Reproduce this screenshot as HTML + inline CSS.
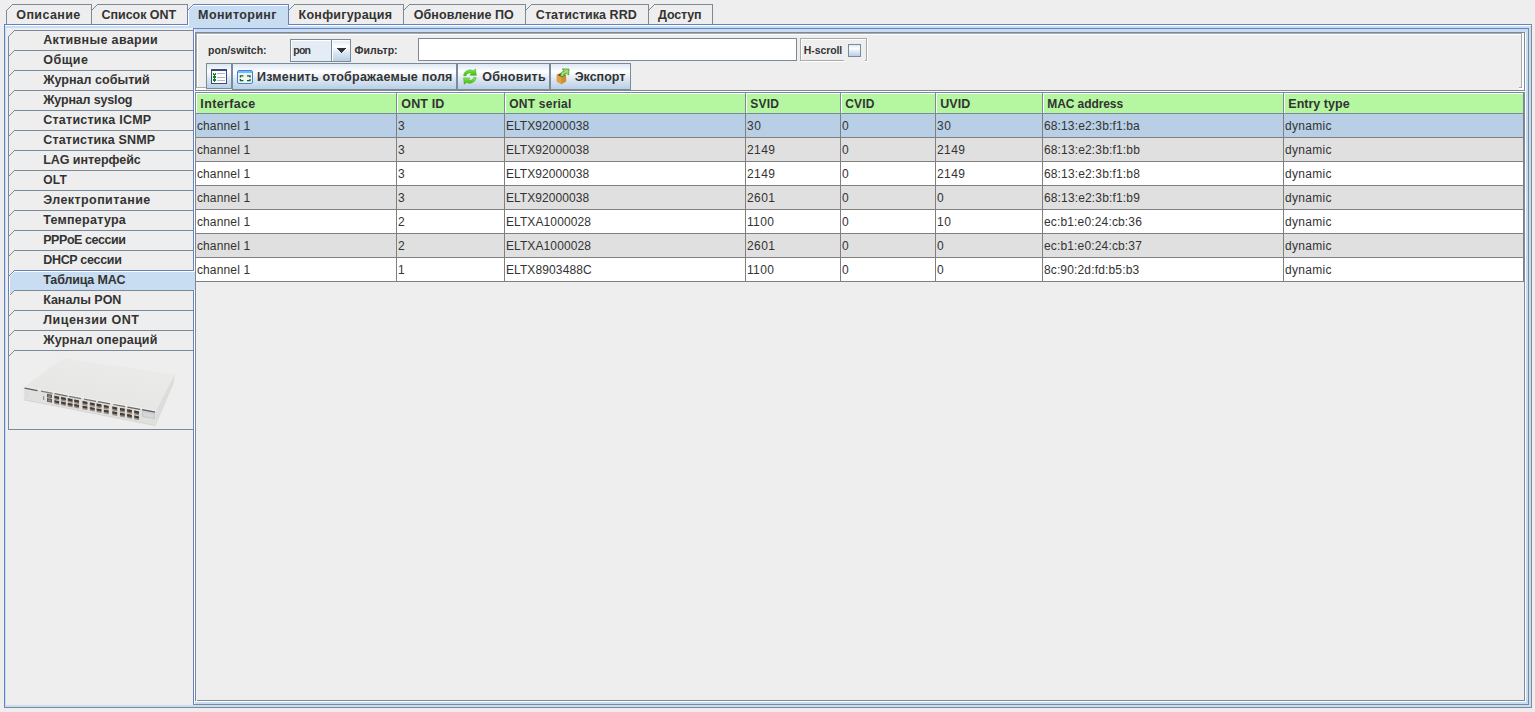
<!DOCTYPE html>
<html lang="ru"><head><meta charset="utf-8"><title>MAC table</title>
<style>
html,body{margin:0;padding:0}
body{width:1535px;height:712px;background:#eeeeee;overflow:hidden;position:relative;
font-family:"Liberation Sans","DejaVu Sans",sans-serif;color:#333333}
svg{position:absolute;left:0;top:0}
.g{position:absolute;left:0;top:0;width:0;height:0}
.t{position:absolute;white-space:pre;font-weight:700;display:block;line-height:16px}
</style></head>
<body>
<svg width="1535" height="712" viewBox="0 0 1535 712" shape-rendering="crispEdges">
<defs>
<linearGradient id="g" x1="0" y1="0" x2="0" y2="1">
<stop offset="0" stop-color="#dde8f3"/><stop offset="0.3" stop-color="#ffffff"/><stop offset="0.6" stop-color="#dde8f3"/><stop offset="1" stop-color="#b8cfe5"/>
</linearGradient>
</defs>
<rect x="4" y="24" width="1528" height="684" fill="#c8ddf2"/>
<rect x="4" y="24" width="1527" height="1" fill="#6382bf"/>
<rect x="5" y="25" width="1526" height="1" fill="#ffffff"/>
<rect x="4" y="24" width="1" height="684" fill="#6382bf"/>
<rect x="1531" y="24" width="1" height="684" fill="#7a8a99"/>
<rect x="4" y="707" width="1528" height="1" fill="#7a8a99"/>
<rect x="6" y="28" width="1523" height="677" fill="#eeeeee"/>
<rect x="12" y="4" width="80" height="1" fill="#7a8a99"/>
<rect x="6" y="10" width="1" height="1" fill="#7a8a99"/>
<rect x="7" y="9" width="1" height="1" fill="#7a8a99"/>
<rect x="8" y="8" width="1" height="1" fill="#7a8a99"/>
<rect x="9" y="7" width="1" height="1" fill="#7a8a99"/>
<rect x="10" y="6" width="1" height="1" fill="#7a8a99"/>
<rect x="11" y="5" width="1" height="1" fill="#7a8a99"/>
<rect x="6" y="10" width="1" height="14" fill="#7a8a99"/>
<rect x="91" y="4" width="1" height="20" fill="#7a8a99"/>
<rect x="97" y="4" width="91" height="1" fill="#7a8a99"/>
<rect x="91" y="10" width="1" height="1" fill="#7a8a99"/>
<rect x="92" y="9" width="1" height="1" fill="#7a8a99"/>
<rect x="93" y="8" width="1" height="1" fill="#7a8a99"/>
<rect x="94" y="7" width="1" height="1" fill="#7a8a99"/>
<rect x="95" y="6" width="1" height="1" fill="#7a8a99"/>
<rect x="96" y="5" width="1" height="1" fill="#7a8a99"/>
<rect x="187" y="4" width="1" height="20" fill="#7a8a99"/>
<polygon points="188,11 194,5 288,5 288,26 188,26" fill="#c8ddf2"/>
<rect x="188" y="24" width="100" height="4" fill="#c8ddf2"/>
<rect x="193" y="4" width="96" height="1" fill="#6382bf"/>
<rect x="187" y="10" width="1" height="1" fill="#6382bf"/>
<rect x="188" y="9" width="1" height="1" fill="#6382bf"/>
<rect x="189" y="8" width="1" height="1" fill="#6382bf"/>
<rect x="190" y="7" width="1" height="1" fill="#6382bf"/>
<rect x="191" y="6" width="1" height="1" fill="#6382bf"/>
<rect x="192" y="5" width="1" height="1" fill="#6382bf"/>
<rect x="187" y="10" width="1" height="15" fill="#6382bf"/>
<rect x="288" y="5" width="1" height="20" fill="#6382bf"/>
<rect x="194" y="5" width="94" height="1" fill="#ffffff"/>
<rect x="188" y="10" width="1" height="1" fill="#ffffff"/>
<rect x="189" y="9" width="1" height="1" fill="#ffffff"/>
<rect x="190" y="8" width="1" height="1" fill="#ffffff"/>
<rect x="191" y="7" width="1" height="1" fill="#ffffff"/>
<rect x="192" y="6" width="1" height="1" fill="#ffffff"/>
<rect x="193" y="5" width="1" height="1" fill="#ffffff"/>
<rect x="188" y="11" width="1" height="15" fill="#ffffff"/>
<rect x="294" y="4" width="110" height="1" fill="#7a8a99"/>
<rect x="288" y="10" width="1" height="1" fill="#7a8a99"/>
<rect x="289" y="9" width="1" height="1" fill="#7a8a99"/>
<rect x="290" y="8" width="1" height="1" fill="#7a8a99"/>
<rect x="291" y="7" width="1" height="1" fill="#7a8a99"/>
<rect x="292" y="6" width="1" height="1" fill="#7a8a99"/>
<rect x="293" y="5" width="1" height="1" fill="#7a8a99"/>
<rect x="403" y="4" width="1" height="20" fill="#7a8a99"/>
<rect x="409" y="4" width="117" height="1" fill="#7a8a99"/>
<rect x="403" y="10" width="1" height="1" fill="#7a8a99"/>
<rect x="404" y="9" width="1" height="1" fill="#7a8a99"/>
<rect x="405" y="8" width="1" height="1" fill="#7a8a99"/>
<rect x="406" y="7" width="1" height="1" fill="#7a8a99"/>
<rect x="407" y="6" width="1" height="1" fill="#7a8a99"/>
<rect x="408" y="5" width="1" height="1" fill="#7a8a99"/>
<rect x="525" y="4" width="1" height="20" fill="#7a8a99"/>
<rect x="531" y="4" width="118" height="1" fill="#7a8a99"/>
<rect x="525" y="10" width="1" height="1" fill="#7a8a99"/>
<rect x="526" y="9" width="1" height="1" fill="#7a8a99"/>
<rect x="527" y="8" width="1" height="1" fill="#7a8a99"/>
<rect x="528" y="7" width="1" height="1" fill="#7a8a99"/>
<rect x="529" y="6" width="1" height="1" fill="#7a8a99"/>
<rect x="530" y="5" width="1" height="1" fill="#7a8a99"/>
<rect x="648" y="4" width="1" height="20" fill="#7a8a99"/>
<rect x="654" y="4" width="59" height="1" fill="#7a8a99"/>
<rect x="648" y="10" width="1" height="1" fill="#7a8a99"/>
<rect x="649" y="9" width="1" height="1" fill="#7a8a99"/>
<rect x="650" y="8" width="1" height="1" fill="#7a8a99"/>
<rect x="651" y="7" width="1" height="1" fill="#7a8a99"/>
<rect x="652" y="6" width="1" height="1" fill="#7a8a99"/>
<rect x="653" y="5" width="1" height="1" fill="#7a8a99"/>
<rect x="712" y="4" width="1" height="20" fill="#7a8a99"/>
<rect x="193" y="28" width="1336" height="677" fill="#c8ddf2"/>
<rect x="193" y="28" width="1335" height="1" fill="#6382bf"/>
<rect x="193" y="28" width="1" height="677" fill="#6382bf"/>
<rect x="194" y="29" width="1" height="675" fill="#ffffff"/>
<rect x="1528" y="28" width="1" height="677" fill="#7a8a99"/>
<rect x="193" y="704" width="1336" height="1" fill="#7a8a99"/>
<rect x="195" y="32" width="1331" height="670" fill="#eeeeee"/>
<rect x="14" y="30" width="179" height="1" fill="#7a8a99"/>
<rect x="8" y="36" width="1" height="1" fill="#7a8a99"/>
<rect x="9" y="35" width="1" height="1" fill="#7a8a99"/>
<rect x="10" y="34" width="1" height="1" fill="#7a8a99"/>
<rect x="11" y="33" width="1" height="1" fill="#7a8a99"/>
<rect x="12" y="32" width="1" height="1" fill="#7a8a99"/>
<rect x="13" y="31" width="1" height="1" fill="#7a8a99"/>
<rect x="14" y="50" width="179" height="1" fill="#7a8a99"/>
<rect x="8" y="56" width="1" height="1" fill="#7a8a99"/>
<rect x="9" y="55" width="1" height="1" fill="#7a8a99"/>
<rect x="10" y="54" width="1" height="1" fill="#7a8a99"/>
<rect x="11" y="53" width="1" height="1" fill="#7a8a99"/>
<rect x="12" y="52" width="1" height="1" fill="#7a8a99"/>
<rect x="13" y="51" width="1" height="1" fill="#7a8a99"/>
<rect x="14" y="70" width="179" height="1" fill="#7a8a99"/>
<rect x="8" y="76" width="1" height="1" fill="#7a8a99"/>
<rect x="9" y="75" width="1" height="1" fill="#7a8a99"/>
<rect x="10" y="74" width="1" height="1" fill="#7a8a99"/>
<rect x="11" y="73" width="1" height="1" fill="#7a8a99"/>
<rect x="12" y="72" width="1" height="1" fill="#7a8a99"/>
<rect x="13" y="71" width="1" height="1" fill="#7a8a99"/>
<rect x="14" y="90" width="179" height="1" fill="#7a8a99"/>
<rect x="8" y="96" width="1" height="1" fill="#7a8a99"/>
<rect x="9" y="95" width="1" height="1" fill="#7a8a99"/>
<rect x="10" y="94" width="1" height="1" fill="#7a8a99"/>
<rect x="11" y="93" width="1" height="1" fill="#7a8a99"/>
<rect x="12" y="92" width="1" height="1" fill="#7a8a99"/>
<rect x="13" y="91" width="1" height="1" fill="#7a8a99"/>
<rect x="14" y="110" width="179" height="1" fill="#7a8a99"/>
<rect x="8" y="116" width="1" height="1" fill="#7a8a99"/>
<rect x="9" y="115" width="1" height="1" fill="#7a8a99"/>
<rect x="10" y="114" width="1" height="1" fill="#7a8a99"/>
<rect x="11" y="113" width="1" height="1" fill="#7a8a99"/>
<rect x="12" y="112" width="1" height="1" fill="#7a8a99"/>
<rect x="13" y="111" width="1" height="1" fill="#7a8a99"/>
<rect x="14" y="130" width="179" height="1" fill="#7a8a99"/>
<rect x="8" y="136" width="1" height="1" fill="#7a8a99"/>
<rect x="9" y="135" width="1" height="1" fill="#7a8a99"/>
<rect x="10" y="134" width="1" height="1" fill="#7a8a99"/>
<rect x="11" y="133" width="1" height="1" fill="#7a8a99"/>
<rect x="12" y="132" width="1" height="1" fill="#7a8a99"/>
<rect x="13" y="131" width="1" height="1" fill="#7a8a99"/>
<rect x="14" y="150" width="179" height="1" fill="#7a8a99"/>
<rect x="8" y="156" width="1" height="1" fill="#7a8a99"/>
<rect x="9" y="155" width="1" height="1" fill="#7a8a99"/>
<rect x="10" y="154" width="1" height="1" fill="#7a8a99"/>
<rect x="11" y="153" width="1" height="1" fill="#7a8a99"/>
<rect x="12" y="152" width="1" height="1" fill="#7a8a99"/>
<rect x="13" y="151" width="1" height="1" fill="#7a8a99"/>
<rect x="14" y="170" width="179" height="1" fill="#7a8a99"/>
<rect x="8" y="176" width="1" height="1" fill="#7a8a99"/>
<rect x="9" y="175" width="1" height="1" fill="#7a8a99"/>
<rect x="10" y="174" width="1" height="1" fill="#7a8a99"/>
<rect x="11" y="173" width="1" height="1" fill="#7a8a99"/>
<rect x="12" y="172" width="1" height="1" fill="#7a8a99"/>
<rect x="13" y="171" width="1" height="1" fill="#7a8a99"/>
<rect x="14" y="190" width="179" height="1" fill="#7a8a99"/>
<rect x="8" y="196" width="1" height="1" fill="#7a8a99"/>
<rect x="9" y="195" width="1" height="1" fill="#7a8a99"/>
<rect x="10" y="194" width="1" height="1" fill="#7a8a99"/>
<rect x="11" y="193" width="1" height="1" fill="#7a8a99"/>
<rect x="12" y="192" width="1" height="1" fill="#7a8a99"/>
<rect x="13" y="191" width="1" height="1" fill="#7a8a99"/>
<rect x="14" y="210" width="179" height="1" fill="#7a8a99"/>
<rect x="8" y="216" width="1" height="1" fill="#7a8a99"/>
<rect x="9" y="215" width="1" height="1" fill="#7a8a99"/>
<rect x="10" y="214" width="1" height="1" fill="#7a8a99"/>
<rect x="11" y="213" width="1" height="1" fill="#7a8a99"/>
<rect x="12" y="212" width="1" height="1" fill="#7a8a99"/>
<rect x="13" y="211" width="1" height="1" fill="#7a8a99"/>
<rect x="14" y="230" width="179" height="1" fill="#7a8a99"/>
<rect x="8" y="236" width="1" height="1" fill="#7a8a99"/>
<rect x="9" y="235" width="1" height="1" fill="#7a8a99"/>
<rect x="10" y="234" width="1" height="1" fill="#7a8a99"/>
<rect x="11" y="233" width="1" height="1" fill="#7a8a99"/>
<rect x="12" y="232" width="1" height="1" fill="#7a8a99"/>
<rect x="13" y="231" width="1" height="1" fill="#7a8a99"/>
<rect x="14" y="250" width="179" height="1" fill="#7a8a99"/>
<rect x="8" y="256" width="1" height="1" fill="#7a8a99"/>
<rect x="9" y="255" width="1" height="1" fill="#7a8a99"/>
<rect x="10" y="254" width="1" height="1" fill="#7a8a99"/>
<rect x="11" y="253" width="1" height="1" fill="#7a8a99"/>
<rect x="12" y="252" width="1" height="1" fill="#7a8a99"/>
<rect x="13" y="251" width="1" height="1" fill="#7a8a99"/>
<polygon points="9,277 15,271 195,271 195,290 15,290 9,296 9,277" fill="#c8ddf2"/>
<rect x="14" y="270" width="179" height="1" fill="#6382bf"/>
<rect x="8" y="276" width="1" height="1" fill="#6382bf"/>
<rect x="9" y="275" width="1" height="1" fill="#6382bf"/>
<rect x="10" y="274" width="1" height="1" fill="#6382bf"/>
<rect x="11" y="273" width="1" height="1" fill="#6382bf"/>
<rect x="12" y="272" width="1" height="1" fill="#6382bf"/>
<rect x="13" y="271" width="1" height="1" fill="#6382bf"/>
<rect x="15" y="271" width="180" height="1" fill="#ffffff"/>
<rect x="9" y="276" width="1" height="1" fill="#ffffff"/>
<rect x="10" y="275" width="1" height="1" fill="#ffffff"/>
<rect x="11" y="274" width="1" height="1" fill="#ffffff"/>
<rect x="12" y="273" width="1" height="1" fill="#ffffff"/>
<rect x="13" y="272" width="1" height="1" fill="#ffffff"/>
<rect x="14" y="271" width="1" height="1" fill="#ffffff"/>
<rect x="14" y="290" width="179" height="1" fill="#7a8a99"/>
<rect x="8" y="296" width="1" height="1" fill="#7a8a99"/>
<rect x="9" y="295" width="1" height="1" fill="#7a8a99"/>
<rect x="10" y="294" width="1" height="1" fill="#7a8a99"/>
<rect x="11" y="293" width="1" height="1" fill="#7a8a99"/>
<rect x="12" y="292" width="1" height="1" fill="#7a8a99"/>
<rect x="13" y="291" width="1" height="1" fill="#7a8a99"/>
<rect x="14" y="310" width="179" height="1" fill="#7a8a99"/>
<rect x="8" y="316" width="1" height="1" fill="#7a8a99"/>
<rect x="9" y="315" width="1" height="1" fill="#7a8a99"/>
<rect x="10" y="314" width="1" height="1" fill="#7a8a99"/>
<rect x="11" y="313" width="1" height="1" fill="#7a8a99"/>
<rect x="12" y="312" width="1" height="1" fill="#7a8a99"/>
<rect x="13" y="311" width="1" height="1" fill="#7a8a99"/>
<rect x="14" y="330" width="179" height="1" fill="#7a8a99"/>
<rect x="8" y="336" width="1" height="1" fill="#7a8a99"/>
<rect x="9" y="335" width="1" height="1" fill="#7a8a99"/>
<rect x="10" y="334" width="1" height="1" fill="#7a8a99"/>
<rect x="11" y="333" width="1" height="1" fill="#7a8a99"/>
<rect x="12" y="332" width="1" height="1" fill="#7a8a99"/>
<rect x="13" y="331" width="1" height="1" fill="#7a8a99"/>
<rect x="14" y="350" width="179" height="1" fill="#7a8a99"/>
<rect x="8" y="356" width="1" height="1" fill="#7a8a99"/>
<rect x="9" y="355" width="1" height="1" fill="#7a8a99"/>
<rect x="10" y="354" width="1" height="1" fill="#7a8a99"/>
<rect x="11" y="353" width="1" height="1" fill="#7a8a99"/>
<rect x="12" y="352" width="1" height="1" fill="#7a8a99"/>
<rect x="13" y="351" width="1" height="1" fill="#7a8a99"/>
<rect x="8" y="36" width="1" height="394" fill="#7a8a99"/>
<rect x="8" y="276" width="1" height="21" fill="#6382bf"/>
<rect x="9" y="277" width="1" height="19" fill="#ffffff"/>
<rect x="8" y="429" width="185" height="1" fill="#7a8a99"/>
<rect x="196" y="91" width="1330" height="1" fill="#ffffff"/>
<rect x="1525" y="33" width="1" height="59" fill="#ffffff"/>
<rect x="195" y="32" width="1330" height="1" fill="#7a8a99"/>
<rect x="195" y="90" width="1330" height="1" fill="#7a8a99"/>
<rect x="195" y="32" width="1" height="59" fill="#7a8a99"/>
<rect x="1524" y="32" width="1" height="59" fill="#7a8a99"/>
<rect x="196" y="33" width="1326" height="1" fill="#aaaaaa"/>
<rect x="197" y="34" width="1327" height="1" fill="#ffffff"/>
<rect x="196" y="33" width="1" height="55" fill="#aaaaaa"/>
<rect x="197" y="34" width="1" height="54" fill="#ffffff"/>
<rect x="196" y="87" width="10" height="1" fill="#aaaaaa"/>
<rect x="196" y="88" width="10" height="2" fill="#ffffff"/>
<rect x="1521" y="33" width="1" height="55" fill="#aaaaaa"/>
<rect x="1522" y="33" width="1" height="57" fill="#ffffff"/>
<rect x="1523" y="33" width="1" height="57" fill="#ffffff"/>
<rect x="1519" y="87" width="3" height="1" fill="#aaaaaa"/>
<rect x="1519" y="88" width="5" height="2" fill="#ffffff"/>
<rect x="290" y="39" width="61" height="23" fill="#7a8a99"/>
<rect x="291" y="40" width="59" height="21" fill="url(#g)"/>
<rect x="291" y="40" width="40" height="21" fill="#e4edf6"/>
<rect x="331" y="40" width="1" height="21" fill="#7a8a99"/>
<rect x="332" y="40" width="1" height="21" fill="#ffffff"/>
<rect x="291" y="40" width="40" height="1" fill="#ffffff"/>
<rect x="291" y="40" width="1" height="21" fill="#ffffff"/>
<rect x="332" y="40" width="18" height="1" fill="#ffffff"/>
<polygon points="336,48 346,48 341,53" fill="#333333"/>
<rect x="418" y="38" width="379" height="23" fill="#7a8a99"/>
<rect x="419" y="39" width="377" height="21" fill="#ffffff"/>
<rect x="801" y="61" width="44" height="1" fill="#ffffff"/>
<rect x="867" y="39" width="1" height="23" fill="#ffffff"/>
<rect x="801" y="39" width="65" height="1" fill="#ffffff"/>
<rect x="801" y="39" width="1" height="21" fill="#ffffff"/>
<rect x="865" y="61" width="3" height="1" fill="#ffffff"/>
<rect x="800" y="38" width="67" height="1" fill="#aaaaaa"/>
<rect x="800" y="60" width="44" height="1" fill="#aaaaaa"/>
<rect x="865" y="60" width="2" height="1" fill="#aaaaaa"/>
<rect x="800" y="38" width="1" height="23" fill="#aaaaaa"/>
<rect x="866" y="38" width="1" height="23" fill="#aaaaaa"/>
<rect x="848" y="44" width="13" height="13" fill="#7a8a99"/>
<rect x="849" y="45" width="11" height="11" fill="url(#g)"/>
<rect x="206" y="63" width="26" height="26" fill="#7a8a99"/>
<rect x="207" y="64" width="24" height="24" fill="url(#g)"/>
<rect x="232" y="63" width="225" height="27" fill="#7a8a99"/>
<rect x="233" y="64" width="223" height="25" fill="url(#g)"/>
<rect x="457" y="63" width="93" height="27" fill="#7a8a99"/>
<rect x="458" y="64" width="91" height="25" fill="url(#g)"/>
<rect x="550" y="63" width="81" height="27" fill="#7a8a99"/>
<rect x="551" y="64" width="79" height="25" fill="url(#g)"/>
<rect x="195" y="92" width="1330" height="1" fill="#7a8a99"/>
<rect x="195" y="92" width="1" height="609" fill="#7a8a99"/>
<rect x="195" y="700" width="1330" height="1" fill="#7a8a99"/>
<rect x="1524" y="92" width="1" height="609" fill="#7a8a99"/>
<rect x="196" y="701" width="1330" height="1" fill="#ffffff"/>
<rect x="1525" y="93" width="1" height="609" fill="#ffffff"/>
<rect x="196" y="700" width="1" height="1" fill="#ffffff"/>
<rect x="196" y="93" width="1328" height="20" fill="#b5f7a1"/>
<rect x="196" y="93" width="1328" height="1" fill="#ffffff"/>
<rect x="196" y="113" width="1328" height="1" fill="#7a8a99"/>
<rect x="196" y="93" width="1" height="20" fill="#ffffff"/>
<rect x="396" y="93" width="1" height="21" fill="#7a8a99"/>
<rect x="397" y="93" width="1" height="20" fill="#ffffff"/>
<rect x="504" y="93" width="1" height="21" fill="#7a8a99"/>
<rect x="505" y="93" width="1" height="20" fill="#ffffff"/>
<rect x="745" y="93" width="1" height="21" fill="#7a8a99"/>
<rect x="746" y="93" width="1" height="20" fill="#ffffff"/>
<rect x="840" y="93" width="1" height="21" fill="#7a8a99"/>
<rect x="841" y="93" width="1" height="20" fill="#ffffff"/>
<rect x="935" y="93" width="1" height="21" fill="#7a8a99"/>
<rect x="936" y="93" width="1" height="20" fill="#ffffff"/>
<rect x="1042" y="93" width="1" height="21" fill="#7a8a99"/>
<rect x="1043" y="93" width="1" height="20" fill="#ffffff"/>
<rect x="1283" y="93" width="1" height="21" fill="#7a8a99"/>
<rect x="1284" y="93" width="1" height="20" fill="#ffffff"/>
<rect x="1523" y="93" width="1" height="21" fill="#7a8a99"/>
<rect x="196" y="114" width="1328" height="23" fill="#b8cfe5"/>
<rect x="196" y="137" width="1328" height="1" fill="#808080"/>
<rect x="196" y="138" width="1328" height="23" fill="#e0e0e0"/>
<rect x="196" y="161" width="1328" height="1" fill="#808080"/>
<rect x="196" y="162" width="1328" height="23" fill="#ffffff"/>
<rect x="196" y="185" width="1328" height="1" fill="#808080"/>
<rect x="196" y="186" width="1328" height="23" fill="#e0e0e0"/>
<rect x="196" y="209" width="1328" height="1" fill="#808080"/>
<rect x="196" y="210" width="1328" height="23" fill="#ffffff"/>
<rect x="196" y="233" width="1328" height="1" fill="#808080"/>
<rect x="196" y="234" width="1328" height="23" fill="#e0e0e0"/>
<rect x="196" y="257" width="1328" height="1" fill="#808080"/>
<rect x="196" y="258" width="1328" height="23" fill="#ffffff"/>
<rect x="196" y="281" width="1328" height="1" fill="#808080"/>
<rect x="396" y="114" width="1" height="168" fill="#808080"/>
<rect x="504" y="114" width="1" height="168" fill="#808080"/>
<rect x="745" y="114" width="1" height="168" fill="#808080"/>
<rect x="840" y="114" width="1" height="168" fill="#808080"/>
<rect x="935" y="114" width="1" height="168" fill="#808080"/>
<rect x="1042" y="114" width="1" height="168" fill="#808080"/>
<rect x="1283" y="114" width="1" height="168" fill="#808080"/>
<rect x="1523" y="114" width="1" height="168" fill="#808080"/>
<rect x="211" y="69" width="16" height="15" fill="#3b4a7d"/>
<rect x="212" y="71" width="14" height="12" fill="#ffffff"/>
<rect x="217" y="73" width="8" height="1" fill="#b7b2cf"/>
<rect x="217" y="77" width="8" height="1" fill="#b7b2cf"/>
<rect x="217" y="80" width="8" height="1" fill="#b7b2cf"/>
<rect x="214" y="74" width="1" height="8" fill="#0a8a1e"/>
<rect x="213" y="73" width="1" height="1" fill="#0a8a1e"/>
<rect x="215" y="73" width="1" height="1" fill="#0a8a1e"/>
<rect x="213" y="76" width="1" height="1" fill="#0a8a1e"/>
<rect x="215" y="76" width="1" height="1" fill="#0a8a1e"/>
<rect x="213" y="79" width="1" height="1" fill="#0a8a1e"/>
<rect x="215" y="79" width="1" height="1" fill="#0a8a1e"/>
<rect x="213" y="74" width="3" height="1" fill="#0a8a1e"/>
<rect x="213" y="77" width="3" height="1" fill="#0a8a1e"/>
<rect x="213" y="80" width="3" height="1" fill="#0a8a1e"/>
</svg>
<svg width="1535" height="712" viewBox="0 0 1535 712">
<rect x="237.5" y="70.5" width="15" height="13" rx="1.5" fill="#f3f3f3" stroke="#3f80d8" stroke-width="1"/>
<rect x="238" y="71" width="14" height="2" fill="#6ebcff"/>
<path d="M240.4 77.6 V75.8 H243.4 M247.0 75.8 H250 V77.6 M250 78.9 V80.6 H247.0 M243.4 80.6 H240.4 V78.9" fill="none" stroke="#0b6a12" stroke-width="1.35"/>
<g>
<linearGradient id="rg" x1="0" y1="0" x2="0" y2="1"><stop offset="0" stop-color="#9be867"/><stop offset="0.5" stop-color="#5fd02c"/><stop offset="1" stop-color="#3fb51a"/></linearGradient>
<path d="M463.6 75.6 C464.2 70.8 469.5 68.6 473.2 70.6 L475.6 68.9 L476.3 75.4 L469.8 75.2 L471.5 73.4 C469.3 72.3 466.6 73.2 466.0 75.9 Z" fill="url(#rg)" stroke="#43b31a" stroke-width="0.5"/>
<path d="M476.2 77.6 C475.6 82.4 470.3 84.6 466.6 82.6 L464.2 84.3 L463.5 77.8 L470.0 78.0 L468.3 79.8 C470.5 80.9 473.2 80.0 473.8 77.3 Z" fill="url(#rg)" stroke="#43b31a" stroke-width="0.5"/>
</g>
<g>
<path d="M556.8 74.8 L561.5 72.6 L566.2 74.8 L566.2 81.4 L561.5 84.2 L556.8 81.4 Z" fill="#cf8e30"/>
<path d="M556.8 74.8 L561.5 77.2 L561.5 84.2 L556.8 81.4 Z" fill="#dea24a"/>
<path d="M557.6 75 L561.5 73.3 L565.4 75 L561.5 76.8 Z" fill="#6b3a10"/>
<path d="M560.6 76.5 C560.4 73.2 561.8 71.4 564.2 70.9 L562.2 69.0 L569.0 69.0 L568.6 75.2 L566.6 73.2 C564.6 73.4 563.6 74.6 563.4 76.6 Z" fill="#9ddc78" stroke="#3f9a24" stroke-width="0.8"/>
</g>
<linearGradient id="tf" x1="0" y1="1" x2="0.6" y2="0"><stop offset="0" stop-color="#e4e4e2"/><stop offset="1" stop-color="#ebebe9"/></linearGradient>
<polygon points="63.2,358.2 174.8,374.3 156.1,411.0 23.7,386.9" fill="url(#tf)"/>
<polygon points="156.1,411.0 174.8,374.3 173.8,383.0 155.8,425.6" fill="#dcdcda"/>
<polygon points="23.7,386.9 156.1,411.0 155.8,425.6 23.9,399.8" fill="#e0e0de"/>
<polyline points="23.7,386.9 156.1,411.0" fill="none" stroke="#f4f4f2" stroke-width="0.7"/>
<polyline points="23.9,399.8 155.8,425.6" fill="none" stroke="#cfcfcd" stroke-width="0.8"/>
<polyline points="24.6,388.2 37.5,390.6" fill="none" stroke="#5e5e5c" stroke-width="1.2"/>
<polyline points="41.0,391.2 52.5,393.3" fill="none" stroke="#7c7c7a" stroke-width="1.2"/>
<polyline points="54.5,393.7 67.5,396.1" fill="none" stroke="#6e6e6c" stroke-width="1.2"/>
<polyline points="69.0,396.4 81.0,398.6" fill="none" stroke="#777775" stroke-width="1.2"/>
<polyline points="84.0,399.1 96.0,401.3" fill="none" stroke="#777775" stroke-width="1.2"/>
<polyline points="98.0,401.7 110.0,403.9" fill="none" stroke="#6e6e6c" stroke-width="1.2"/>
<polyline points="113.5,404.5 125.0,406.6" fill="none" stroke="#6e6e6c" stroke-width="1.2"/>
<polyline points="127.5,407.1 140.0,409.4" fill="none" stroke="#666664" stroke-width="1.2"/>
<polyline points="142.0,409.7 155.0,412.1" fill="none" stroke="#555553" stroke-width="1.2"/>
<polygon points="53.9,395.1 59.6,396.1 59.6,404.9 53.9,403.8" fill="#d6d4d0"/>
<polygon points="54.4,395.8 59.1,396.7 59.1,400.4 54.4,399.5" fill="#958b82"/>
<polygon points="54.4,395.8 59.1,396.7 59.1,398.9 54.4,398.0" fill="#423a33"/>
<polygon points="54.4,400.3 59.1,401.2 59.1,404.7 54.4,403.8" fill="#958b82"/>
<polygon points="54.4,400.3 59.1,401.2 59.1,403.2 54.4,402.3" fill="#423a33"/>
<polygon points="60.6,396.3 66.3,397.3 66.3,406.2 60.6,405.1" fill="#d6d4d0"/>
<polygon points="61.1,397.1 65.8,397.9 65.8,401.7 61.1,400.8" fill="#958b82"/>
<polygon points="61.1,397.1 65.8,397.9 65.8,400.1 61.1,399.2" fill="#423a33"/>
<polygon points="61.1,401.6 65.8,402.5 65.8,406.0 61.1,405.1" fill="#958b82"/>
<polygon points="61.1,401.6 65.8,402.5 65.8,404.5 61.1,403.6" fill="#423a33"/>
<polygon points="67.3,397.5 73.0,398.6 73.0,407.5 67.3,406.4" fill="#d6d4d0"/>
<polygon points="67.8,398.3 72.5,399.2 72.5,403.0 67.8,402.1" fill="#958b82"/>
<polygon points="67.8,398.3 72.5,399.2 72.5,401.4 67.8,400.5" fill="#423a33"/>
<polygon points="67.8,402.9 72.5,403.8 72.5,407.3 67.8,406.4" fill="#958b82"/>
<polygon points="67.8,402.9 72.5,403.8 72.5,405.8 67.8,404.9" fill="#423a33"/>
<polygon points="73.8,398.7 79.5,399.8 79.5,408.8 73.8,407.7" fill="#d6d4d0"/>
<polygon points="74.3,399.5 79.0,400.4 79.0,404.2 74.3,403.3" fill="#958b82"/>
<polygon points="74.3,399.5 79.0,400.4 79.0,402.6 74.3,401.7" fill="#423a33"/>
<polygon points="74.3,404.1 79.0,405.0 79.0,408.5 74.3,407.6" fill="#958b82"/>
<polygon points="74.3,404.1 79.0,405.0 79.0,407.0 74.3,406.1" fill="#423a33"/>
<polygon points="82.1,400.3 87.8,401.3 87.8,410.4 82.1,409.3" fill="#d6d4d0"/>
<polygon points="82.6,401.0 87.3,401.9 87.3,405.7 82.6,404.9" fill="#958b82"/>
<polygon points="82.6,401.0 87.3,401.9 87.3,404.1 82.6,403.3" fill="#423a33"/>
<polygon points="82.6,405.7 87.3,406.6 87.3,410.1 82.6,409.2" fill="#958b82"/>
<polygon points="82.6,405.7 87.3,406.6 87.3,408.6 82.6,407.7" fill="#423a33"/>
<polygon points="89.4,401.6 95.1,402.7 95.1,411.8 89.4,410.7" fill="#d6d4d0"/>
<polygon points="89.9,402.4 94.6,403.3 94.6,407.1 89.9,406.2" fill="#958b82"/>
<polygon points="89.9,402.4 94.6,403.3 94.6,405.5 89.9,404.6" fill="#423a33"/>
<polygon points="89.9,407.1 94.6,408.0 94.6,411.5 89.9,410.6" fill="#958b82"/>
<polygon points="89.9,407.1 94.6,408.0 94.6,410.0 89.9,409.1" fill="#423a33"/>
<polygon points="96.2,402.9 101.9,403.9 101.9,413.1 96.2,412.0" fill="#d6d4d0"/>
<polygon points="96.7,403.6 101.4,404.5 101.4,408.4 96.7,407.5" fill="#958b82"/>
<polygon points="96.7,403.6 101.4,404.5 101.4,406.8 96.7,405.9" fill="#423a33"/>
<polygon points="96.7,408.4 101.4,409.2 101.4,412.9 96.7,411.9" fill="#958b82"/>
<polygon points="96.7,408.4 101.4,409.2 101.4,411.3 96.7,410.4" fill="#423a33"/>
<polygon points="103.4,404.2 109.1,405.2 109.1,414.5 103.4,413.4" fill="#d6d4d0"/>
<polygon points="103.9,405.0 108.6,405.9 108.6,409.8 103.9,408.9" fill="#958b82"/>
<polygon points="103.9,405.0 108.6,405.9 108.6,408.1 103.9,407.2" fill="#423a33"/>
<polygon points="103.9,409.7 108.6,410.6 108.6,414.2 103.9,413.3" fill="#958b82"/>
<polygon points="103.9,409.7 108.6,410.6 108.6,412.7 103.9,411.8" fill="#423a33"/>
<polygon points="111.9,405.8 117.6,406.8 117.6,416.1 111.9,415.0" fill="#d6d4d0"/>
<polygon points="112.4,406.6 117.1,407.4 117.1,411.4 112.4,410.5" fill="#958b82"/>
<polygon points="112.4,406.6 117.1,407.4 117.1,409.7 112.4,408.8" fill="#423a33"/>
<polygon points="112.4,411.3 117.1,412.2 117.1,415.9 112.4,415.0" fill="#958b82"/>
<polygon points="112.4,411.3 117.1,412.2 117.1,414.3 112.4,413.4" fill="#423a33"/>
<polygon points="119.5,407.2 125.2,408.2 125.2,417.6 119.5,416.5" fill="#d6d4d0"/>
<polygon points="120.0,408.0 124.7,408.8 124.7,412.8 120.0,411.9" fill="#958b82"/>
<polygon points="120.0,408.0 124.7,408.8 124.7,411.1 120.0,410.3" fill="#423a33"/>
<polygon points="120.0,412.8 124.7,413.7 124.7,417.4 120.0,416.4" fill="#958b82"/>
<polygon points="120.0,412.8 124.7,413.7 124.7,415.8 120.0,414.9" fill="#423a33"/>
<polygon points="126.6,408.5 132.3,409.5 132.3,419.0 126.6,417.9" fill="#d6d4d0"/>
<polygon points="127.1,409.3 131.8,410.1 131.8,414.1 127.1,413.3" fill="#958b82"/>
<polygon points="127.1,409.3 131.8,410.1 131.8,412.5 127.1,411.6" fill="#423a33"/>
<polygon points="127.1,414.1 131.8,415.0 131.8,418.7 127.1,417.8" fill="#958b82"/>
<polygon points="127.1,414.1 131.8,415.0 131.8,417.2 127.1,416.3" fill="#423a33"/>
<polygon points="133.8,409.8 139.5,410.9 139.5,420.4 133.8,419.3" fill="#d6d4d0"/>
<polygon points="134.3,410.6 139.0,411.5 139.0,415.5 134.3,414.6" fill="#958b82"/>
<polygon points="134.3,410.6 139.0,411.5 139.0,413.8 134.3,412.9" fill="#423a33"/>
<polygon points="134.3,415.5 139.0,416.4 139.0,420.1 134.3,419.2" fill="#958b82"/>
<polygon points="134.3,415.5 139.0,416.4 139.0,418.5 134.3,417.6" fill="#423a33"/>
<polygon points="47.0,393.8 52.0,394.7 52.0,398.3 47.0,397.3" fill="#5d5a55"/>
<polygon points="48.2,395.3 50.8,395.8 50.8,397.4 48.2,396.9" fill="#8d8a82"/>
<polygon points="47.0,398.0 52.0,398.9 52.0,402.7 47.0,401.7" fill="#5d5a55"/>
<polygon points="48.2,399.6 50.8,400.0 50.8,401.8 48.2,401.3" fill="#8d8a82"/>
<polygon points="43.0,395.9 44.2,396.2 44.2,400.1 43.0,399.9" fill="#9a8f86"/>
<polygon points="142.5,411.4 154.5,413.6 154.5,418.7 142.5,416.5" fill="#d4d6da" stroke="#b4b8c0" stroke-width="0.6"/>
<polygon points="25.5,391.1 28.5,391.7 28.5,398.1 25.5,397.6" fill="#dbdbd9"/>
</svg>
<nav class="g" aria-label="main tabs">
<span class="t tt" style="left:16.3px;top:7px;font-size:12.5px;letter-spacing:0.400px;">Описание</span>
<span class="t tt" style="left:101.55px;top:7px;font-size:12.5px;letter-spacing:-0.051px;">Список ONT</span>
<span class="t tt" style="left:198.1px;top:7px;font-size:12.5px;letter-spacing:0.383px;">Мониторинг</span>
<span class="t tt" style="left:298.6px;top:7px;font-size:12.5px;letter-spacing:0.247px;">Конфигурация</span>
<span class="t tt" style="left:413.75px;top:7px;font-size:12.5px;letter-spacing:0.071px;">Обновление ПО</span>
<span class="t tt" style="left:535.85px;top:7px;font-size:12.5px;letter-spacing:0.036px;">Статистика RRD</span>
<span class="t tt" style="left:658.1px;top:7px;font-size:12.5px;letter-spacing:-0.203px;">Доступ</span>
</nav>
<nav class="g" aria-label="monitoring sections">
<span class="t lt" style="left:43.2px;top:32px;font-size:12.5px;letter-spacing:0.332px;">Активные аварии</span>
<span class="t lt" style="left:43.2px;top:52px;font-size:12.5px;letter-spacing:0.518px;">Общие</span>
<span class="t lt" style="left:43.2px;top:72px;font-size:12.5px;letter-spacing:0.030px;">Журнал событий</span>
<span class="t lt" style="left:43.2px;top:92px;font-size:12.5px;letter-spacing:-0.161px;">Журнал syslog</span>
<span class="t lt" style="left:43.2px;top:112px;font-size:12.5px;letter-spacing:0.243px;">Статистика ICMP</span>
<span class="t lt" style="left:43.2px;top:132px;font-size:12.5px;letter-spacing:0.181px;">Статистика SNMP</span>
<span class="t lt" style="left:43.2px;top:152px;font-size:12.5px;letter-spacing:-0.047px;">LAG интерфейс</span>
<span class="t lt" style="left:43.2px;top:172px;font-size:12px;letter-spacing:0.248px;">OLT</span>
<span class="t lt" style="left:43.2px;top:192px;font-size:12.5px;letter-spacing:0.427px;">Электропитание</span>
<span class="t lt" style="left:43.2px;top:212px;font-size:12.5px;letter-spacing:0.266px;">Температура</span>
<span class="t lt" style="left:43.2px;top:232px;font-size:12.5px;letter-spacing:-0.434px;">PPPoE сессии</span>
<span class="t lt" style="left:43.2px;top:252px;font-size:12.5px;letter-spacing:-0.298px;">DHCP сессии</span>
<span class="t lt" style="left:43.2px;top:272px;font-size:12.5px;letter-spacing:-0.164px;">Таблица MAC</span>
<span class="t lt" style="left:43.2px;top:292px;font-size:12.5px;letter-spacing:-0.024px;">Каналы PON</span>
<span class="t lt" style="left:43.2px;top:312px;font-size:12.5px;letter-spacing:0.520px;">Лицензии ONT</span>
<span class="t lt" style="left:43.2px;top:332px;font-size:12.5px;letter-spacing:0.199px;">Журнал операций</span>
</nav>
<div class="g" role="toolbar">
<span class="t sm" style="left:208.0px;top:42px;font-size:10.5px;letter-spacing:0.027px;">pon/switch:</span>
<span class="t sm" style="left:293.3px;top:42px;font-size:10.5px;letter-spacing:-0.821px;">pon</span>
<span class="t sm" style="left:354.6px;top:42px;font-size:10.5px;letter-spacing:0.055px;">Фильтр:</span>
<span class="t sm" style="left:803.8px;top:42px;font-size:10.5px;letter-spacing:-0.099px;">H-scroll</span>
<span class="t bt" style="left:257.0px;top:69px;font-size:12.5px;letter-spacing:0.215px;">Изменить отображаемые поля</span>
<span class="t bt" style="left:482.2px;top:69px;font-size:12.5px;letter-spacing:0.228px;">Обновить</span>
<span class="t bt" style="left:574.7px;top:69px;font-size:12.5px;letter-spacing:-0.002px;">Экспорт</span>
</div>
<div class="g" role="table"><div class="g" role="row">
<span class="t th" style="left:200.3px;top:96px;font-size:12.5px;letter-spacing:0.362px;">Interface</span>
<span class="t th" style="left:401.3px;top:96px;font-size:12.5px;letter-spacing:0.128px;">ONT ID</span>
<span class="t th" style="left:509.3px;top:96px;font-size:12px;letter-spacing:0.220px;">ONT serial</span>
<span class="t th" style="left:750.3px;top:96px;font-size:12px;letter-spacing:0.164px;">SVID</span>
<span class="t th" style="left:845.3px;top:96px;font-size:12px;letter-spacing:0.110px;">CVID</span>
<span class="t th" style="left:940.3px;top:96px;font-size:12.5px;letter-spacing:0.045px;">UVID</span>
<span class="t th" style="left:1047.3px;top:96px;font-size:12px;letter-spacing:-0.089px;">MAC address</span>
<span class="t th" style="left:1288.3px;top:96px;font-size:12.5px;letter-spacing:0.019px;">Entry type</span>
</div>
<div class="g" role="row">
<span class="t td" style="left:196.9px;top:118px;font-size:12px;letter-spacing:0.145px;font-weight:400;">channel 1</span>
<span class="t td" style="left:397.9px;top:118px;font-size:12px;letter-spacing:0.334px;font-weight:400;">3</span>
<span class="t td" style="left:505.9px;top:118px;font-size:12px;letter-spacing:0.081px;font-weight:400;">ELTX92000038</span>
<span class="t td" style="left:746.9px;top:118px;font-size:12px;letter-spacing:0.667px;font-weight:400;">30</span>
<span class="t td" style="left:841.9px;top:118px;font-size:12px;letter-spacing:0.334px;font-weight:400;">0</span>
<span class="t td" style="left:936.9px;top:118px;font-size:12px;letter-spacing:0.667px;font-weight:400;">30</span>
<span class="t td" style="left:1043.9px;top:118px;font-size:12px;letter-spacing:0.155px;font-weight:400;">68:13:e2:3b:f1:ba</span>
<span class="t td" style="left:1284.9px;top:118px;font-size:12px;letter-spacing:0.336px;font-weight:400;">dynamic</span>
</div>
<div class="g" role="row">
<span class="t td" style="left:196.9px;top:142px;font-size:12px;letter-spacing:0.145px;font-weight:400;">channel 1</span>
<span class="t td" style="left:397.9px;top:142px;font-size:12px;letter-spacing:0.334px;font-weight:400;">3</span>
<span class="t td" style="left:505.9px;top:142px;font-size:12px;letter-spacing:0.081px;font-weight:400;">ELTX92000038</span>
<span class="t td" style="left:746.9px;top:142px;font-size:12px;letter-spacing:0.445px;font-weight:400;">2149</span>
<span class="t td" style="left:841.9px;top:142px;font-size:12px;letter-spacing:0.334px;font-weight:400;">0</span>
<span class="t td" style="left:936.9px;top:142px;font-size:12px;letter-spacing:0.445px;font-weight:400;">2149</span>
<span class="t td" style="left:1043.9px;top:142px;font-size:12px;letter-spacing:0.158px;font-weight:400;">68:13:e2:3b:f1:bb</span>
<span class="t td" style="left:1284.9px;top:142px;font-size:12px;letter-spacing:0.336px;font-weight:400;">dynamic</span>
</div>
<div class="g" role="row">
<span class="t td" style="left:196.9px;top:166px;font-size:12px;letter-spacing:0.145px;font-weight:400;">channel 1</span>
<span class="t td" style="left:397.9px;top:166px;font-size:12px;letter-spacing:0.334px;font-weight:400;">3</span>
<span class="t td" style="left:505.9px;top:166px;font-size:12px;letter-spacing:0.081px;font-weight:400;">ELTX92000038</span>
<span class="t td" style="left:746.9px;top:166px;font-size:12px;letter-spacing:0.445px;font-weight:400;">2149</span>
<span class="t td" style="left:841.9px;top:166px;font-size:12px;letter-spacing:0.334px;font-weight:400;">0</span>
<span class="t td" style="left:936.9px;top:166px;font-size:12px;letter-spacing:0.445px;font-weight:400;">2149</span>
<span class="t td" style="left:1043.9px;top:166px;font-size:12px;letter-spacing:0.158px;font-weight:400;">68:13:e2:3b:f1:b8</span>
<span class="t td" style="left:1284.9px;top:166px;font-size:12px;letter-spacing:0.336px;font-weight:400;">dynamic</span>
</div>
<div class="g" role="row">
<span class="t td" style="left:196.9px;top:190px;font-size:12px;letter-spacing:0.145px;font-weight:400;">channel 1</span>
<span class="t td" style="left:397.9px;top:190px;font-size:12px;letter-spacing:0.334px;font-weight:400;">3</span>
<span class="t td" style="left:505.9px;top:190px;font-size:12px;letter-spacing:0.081px;font-weight:400;">ELTX92000038</span>
<span class="t td" style="left:746.9px;top:190px;font-size:12px;letter-spacing:0.445px;font-weight:400;">2601</span>
<span class="t td" style="left:841.9px;top:190px;font-size:12px;letter-spacing:0.334px;font-weight:400;">0</span>
<span class="t td" style="left:936.9px;top:190px;font-size:12px;letter-spacing:0.334px;font-weight:400;">0</span>
<span class="t td" style="left:1043.9px;top:190px;font-size:12px;letter-spacing:0.158px;font-weight:400;">68:13:e2:3b:f1:b9</span>
<span class="t td" style="left:1284.9px;top:190px;font-size:12px;letter-spacing:0.336px;font-weight:400;">dynamic</span>
</div>
<div class="g" role="row">
<span class="t td" style="left:196.9px;top:214px;font-size:12px;letter-spacing:0.145px;font-weight:400;">channel 1</span>
<span class="t td" style="left:397.9px;top:214px;font-size:12px;letter-spacing:0.334px;font-weight:400;">2</span>
<span class="t td" style="left:505.9px;top:214px;font-size:12px;letter-spacing:0.114px;font-weight:400;">ELTXA1000028</span>
<span class="t td" style="left:746.9px;top:214px;font-size:12px;letter-spacing:0.430px;font-weight:400;">1100</span>
<span class="t td" style="left:841.9px;top:214px;font-size:12px;letter-spacing:0.334px;font-weight:400;">0</span>
<span class="t td" style="left:936.9px;top:214px;font-size:12px;letter-spacing:0.667px;font-weight:400;">10</span>
<span class="t td" style="left:1043.9px;top:214px;font-size:12px;letter-spacing:0.161px;font-weight:400;">ec:b1:e0:24:cb:36</span>
<span class="t td" style="left:1284.9px;top:214px;font-size:12px;letter-spacing:0.336px;font-weight:400;">dynamic</span>
</div>
<div class="g" role="row">
<span class="t td" style="left:196.9px;top:238px;font-size:12px;letter-spacing:0.145px;font-weight:400;">channel 1</span>
<span class="t td" style="left:397.9px;top:238px;font-size:12px;letter-spacing:0.334px;font-weight:400;">2</span>
<span class="t td" style="left:505.9px;top:238px;font-size:12px;letter-spacing:0.114px;font-weight:400;">ELTXA1000028</span>
<span class="t td" style="left:746.9px;top:238px;font-size:12px;letter-spacing:0.445px;font-weight:400;">2601</span>
<span class="t td" style="left:841.9px;top:238px;font-size:12px;letter-spacing:0.334px;font-weight:400;">0</span>
<span class="t td" style="left:936.9px;top:238px;font-size:12px;letter-spacing:0.334px;font-weight:400;">0</span>
<span class="t td" style="left:1043.9px;top:238px;font-size:12px;letter-spacing:0.161px;font-weight:400;">ec:b1:e0:24:cb:37</span>
<span class="t td" style="left:1284.9px;top:238px;font-size:12px;letter-spacing:0.336px;font-weight:400;">dynamic</span>
</div>
<div class="g" role="row">
<span class="t td" style="left:196.9px;top:262px;font-size:12px;letter-spacing:0.145px;font-weight:400;">channel 1</span>
<span class="t td" style="left:397.9px;top:262px;font-size:12px;letter-spacing:0.334px;font-weight:400;">1</span>
<span class="t td" style="left:505.9px;top:262px;font-size:12px;letter-spacing:0.115px;font-weight:400;">ELTX8903488C</span>
<span class="t td" style="left:746.9px;top:262px;font-size:12px;letter-spacing:0.430px;font-weight:400;">1100</span>
<span class="t td" style="left:841.9px;top:262px;font-size:12px;letter-spacing:0.334px;font-weight:400;">0</span>
<span class="t td" style="left:936.9px;top:262px;font-size:12px;letter-spacing:0.334px;font-weight:400;">0</span>
<span class="t td" style="left:1043.9px;top:262px;font-size:12px;letter-spacing:0.157px;font-weight:400;">8c:90:2d:fd:b5:b3</span>
<span class="t td" style="left:1284.9px;top:262px;font-size:12px;letter-spacing:0.336px;font-weight:400;">dynamic</span>
</div>
</div>
</body></html>
